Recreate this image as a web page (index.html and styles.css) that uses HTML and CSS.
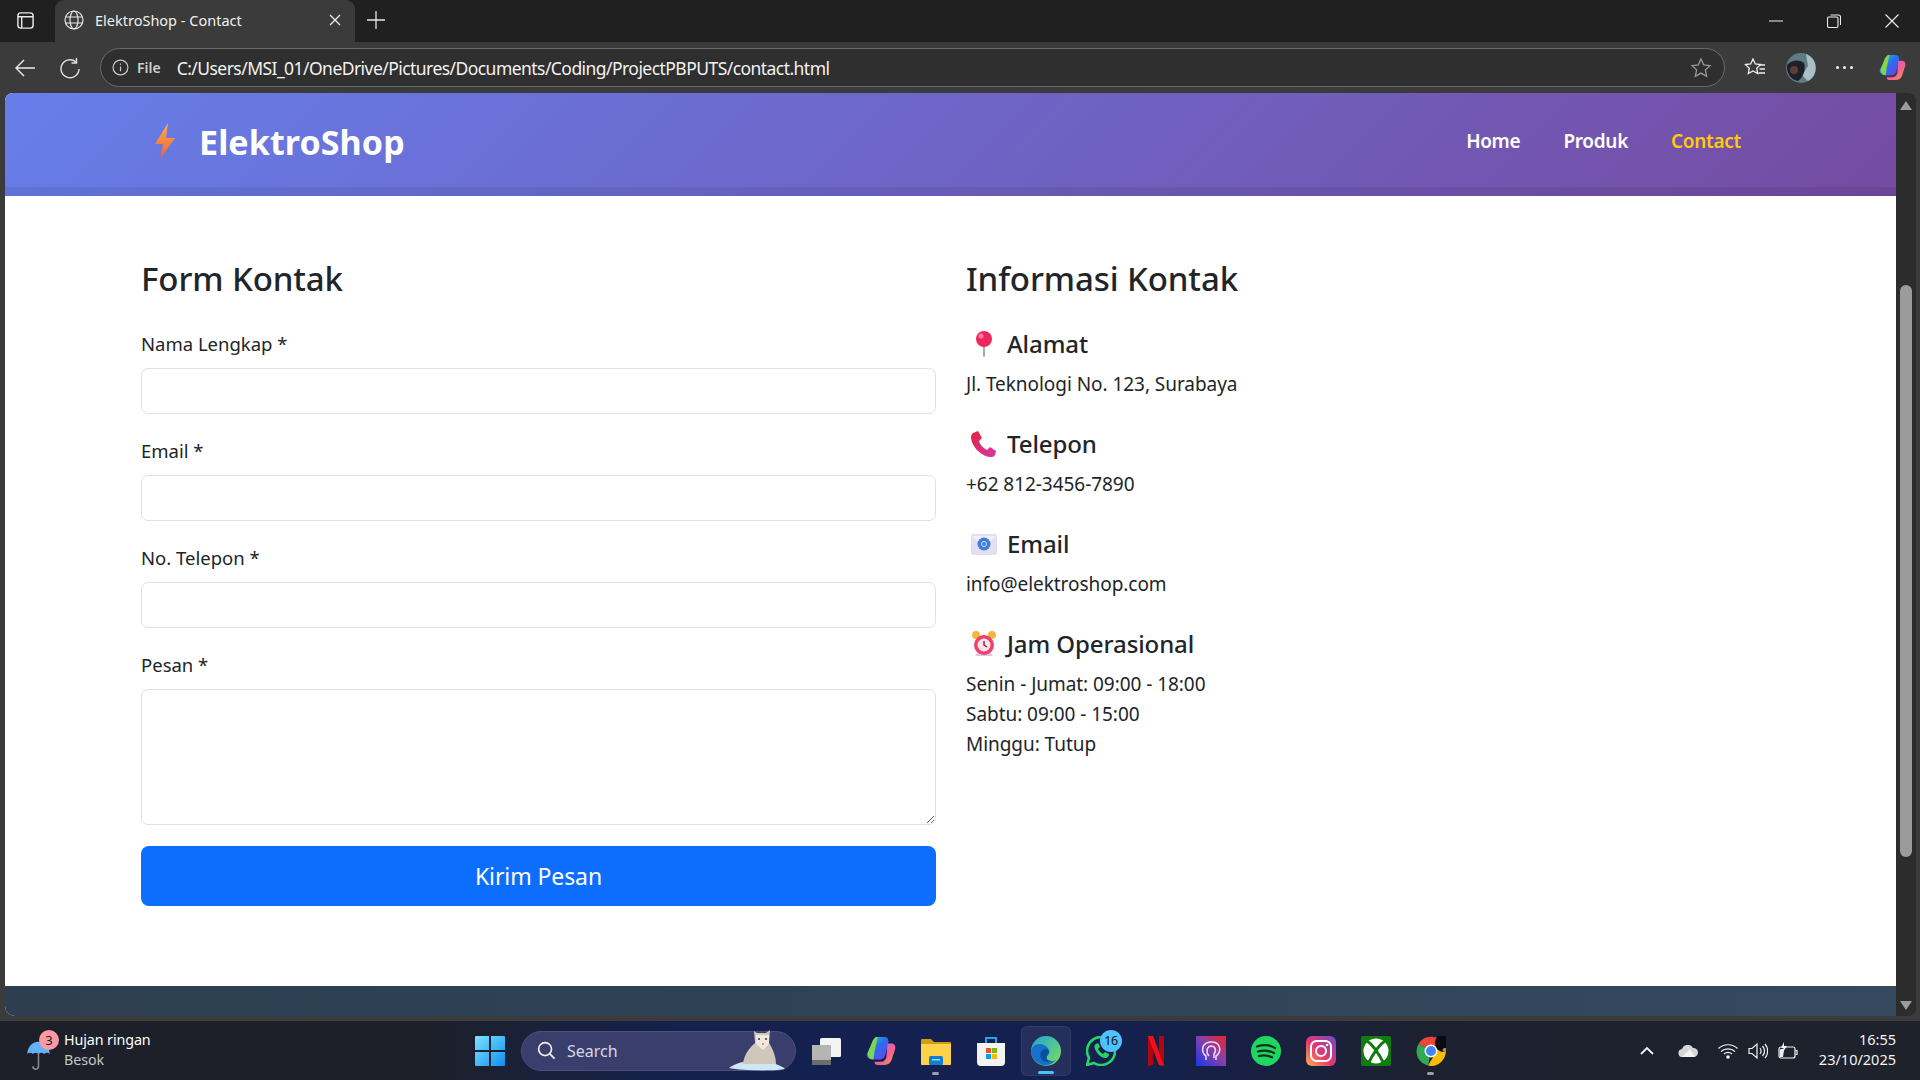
FILE: index.html
```html
<!DOCTYPE html>
<html lang="en">
<head>
    <meta charset="UTF-8">
    <title>ElektroShop - Contact</title>
    <link rel="stylesheet" href="styles.css">
</head>
<body>
<div class="window">
    <!-- tab strip -->
    <div class="tabbar">
        <svg class="tab-side" viewBox="0 0 20 20" fill="none" stroke="#e8e8e8" stroke-width="1.5"><rect x="2" y="2" width="16" height="16" rx="3"/><path d="M2 6h16M6 6v12"/></svg>
        <div class="tab">
            <svg class="tab-globe" viewBox="0 0 20 20" fill="none" stroke="#e6e6e6" stroke-width="1.2"><circle cx="10" cy="10" r="9"/><ellipse cx="10" cy="10" rx="4" ry="9"/><path d="M1.5 7h17M1.5 13h17"/></svg>
            <span class="tab-title">ElektroShop - Contact</span>
            <svg class="tab-close" viewBox="0 0 12 12" stroke="#eee" stroke-width="1.3"><path d="M1 1l10 10M11 1L1 11"/></svg>
        </div>
        <svg class="tab-new" viewBox="0 0 18 18" stroke="#e8e8e8" stroke-width="1.3"><path d="M9 0v18M0 9h18"/></svg>
        <div class="win-controls">
            <svg viewBox="0 0 14 14" stroke="#eee" stroke-width="1"><path d="M0 7h14"/></svg>
            <svg viewBox="0 0 14 14" fill="none" stroke="#eee" stroke-width="1.1"><rect x="0.5" y="3" width="10.5" height="10.5" rx="1.5"/><path d="M3.5 1h8a2 2 0 0 1 2 2v8"/></svg>
            <svg viewBox="0 0 14 14" stroke="#eee" stroke-width="1.1"><path d="M0.5 0.5l13 13M13.5 0.5l-13 13"/></svg>
        </div>
    </div>

    <!-- address bar row -->
    <div class="toolbar">
        <svg class="tool-icon tool-back" viewBox="0 0 22 22" fill="none" stroke="#eee" stroke-width="1.4"><path d="M21 11H2M10 3l-8 8 8 8"/></svg>
        <svg class="tool-icon tool-reload" viewBox="0 0 22 22" fill="none" stroke="#e4e4e4" stroke-width="1.4"><path d="M17 5a9 9 0 1 0 3 7"/><path d="M17.500 1v5h-5"/></svg>
        <div class="address">
            <svg class="info-icon" viewBox="0 0 16 16" fill="none" stroke="#ccc" stroke-width="1.1"><circle cx="8" cy="8" r="7"/><path d="M8 7v4.500M8 4.200v1.300"/></svg>
            <span class="file-label">File</span>
            <span class="url">C:/Users/MSI_01/OneDrive/Pictures/Documents/Coding/ProjectPBPUTS/contact.html</span>
            <svg class="star" viewBox="0 0 22 22" fill="none" stroke="#9a9a9a" stroke-width="1.3"><path d="M11 2l2.700 5.800 6.300.8-4.600 4.300 1.200 6.300L11 16.100l-5.600 3.100 1.200-6.300L2 8.600l6.300-.8z"/></svg>
        </div>
        <svg class="tool-icon tool-favs" viewBox="0 0 22 22" fill="none" stroke="#eee" stroke-width="1.3"><path d="M9 2l2.300 5 5.200.6-3.800 3.600 1 5.300L9 13.900l-4.700 2.600 1-5.300L1.500 7.600 6.700 7z"/><path d="M15 8h6M15.500 12h5.500M14.500 16h6.500"/></svg>
        <svg class="avatar" viewBox="0 0 30 30"><circle cx="15" cy="15" r="15" fill="#5f7c84"/><path d="M20 1a15 15 0 0 1 2 27l-6-6 6-9z" fill="#a9c0c4"/><path d="M1 12c4-5 12-6 17-2 2 5 0 14-6 18C5 27 0 20 1 12z" fill="#1d2026"/><circle cx="8" cy="17" r="4" fill="#5b4034"/></svg>
        <div class="more-dots"><i></i><i></i><i></i></div>
        <svg class="copilot" viewBox="0 0 28 28">
            <defs>
                <linearGradient id="copA" x1="0" y1="0" x2="1" y2="1"><stop offset="0" stop-color="#1fc5e8"/><stop offset=".5" stop-color="#2d6bea"/><stop offset="1" stop-color="#7c3aed"/></linearGradient>
                <linearGradient id="copB" x1="0" y1="0" x2="1" y2="1"><stop offset="0" stop-color="#b65ef2"/><stop offset=".6" stop-color="#f2628e"/><stop offset="1" stop-color="#ffa14a"/></linearGradient>
            </defs>
            <path d="M9 1h8c3 0 4 2 4 4l-3 13c-1 3-3 4-5 4H7c-5 0-7-3-6-6z" fill="url(#copA)"/>
            <path d="M2 15l4-10c1-2 2-4 5-4L8 14l-1 8c-4 0-6-3-5-7z" fill="#7fd64b"/>
            <path d="M20 7h4c3 0 4 3 3 6l-3 9c-1 3-3 5-7 5h-6c-2 0-3-1-3-3h6c3 0 4-2 5-4z" fill="url(#copB)"/>
        </svg>
    </div>

    <!-- browser content -->
    <div class="content-frame">
        <div class="page">
            <nav class="navbar">
                <a class="brand">
                    <svg class="bolt" viewBox="0 0 22 36">
                        <defs><linearGradient id="boltFill" x1="0" y1="0" x2="0" y2="1"><stop offset="0" stop-color="#fdb244"/><stop offset="1" stop-color="#ee5d3f"/></linearGradient></defs>
                        <path d="M14 0L1 21h8L6 36l15-21h-9z" fill="url(#boltFill)"/>
                    </svg>
                    <span>ElektroShop</span>
                </a>
                <ul class="nav-links">
                    <li>Home</li>
                    <li>Produk</li>
                    <li class="active">Contact</li>
                </ul>
            </nav>

            <main class="contact">
                <section>
                    <h2 class="section-title">Form Kontak</h2>
                    <form>
                        <div class="field">
                            <label for="nama">Nama Lengkap *</label>
                            <input id="nama" type="text">
                        </div>
                        <div class="field">
                            <label for="email">Email *</label>
                            <input id="email" type="email">
                        </div>
                        <div class="field">
                            <label for="telp">No. Telepon *</label>
                            <input id="telp" type="tel">
                        </div>
                        <div class="field field-message">
                            <label for="pesan">Pesan *</label>
                            <textarea id="pesan"></textarea>
                        </div>
                        <button type="button" class="submit">Kirim Pesan</button>
                    </form>
                </section>

                <section>
                    <h2 class="section-title">Informasi Kontak</h2>
                    <div class="info-item">
                        <h3>
                            <svg class="emoji" viewBox="0 0 28 28">
                                <rect x="13" y="13" width="2" height="14" rx="1" fill="#a9a9b3"/>
                                <circle cx="14" cy="9" r="8" fill="#f0265f"/>
                                <circle cx="11" cy="6" r="2.500" fill="#ff7fa2"/>
                            </svg>
                            Alamat
                        </h3>
                        <p>Jl. Teknologi No. 123, Surabaya</p>
                    </div>
                    <div class="info-item">
                        <h3>
                            <svg class="emoji" viewBox="0 0 28 28">
                                <defs><linearGradient id="phoneFill" x1="0" y1="0" x2="1" y2="1"><stop offset="0" stop-color="#e0263f"/><stop offset="1" stop-color="#d836a8"/></linearGradient></defs>
                                <path d="M3 3l5-2 4 7-3 3c1 4 4 7 8 9l3-3 6 4-1 4c-1 2-3 2-5 2C10 26 1 15 1 7c0-2 1-3 2-4z" fill="url(#phoneFill)"/>
                            </svg>
                            Telepon
                        </h3>
                        <p>+62 812-3456-7890</p>
                    </div>
                    <div class="info-item">
                        <h3>
                            <svg class="emoji" viewBox="0 0 28 28">
                                <rect x="1" y="4" width="26" height="21" rx="2" fill="#e6ddf0"/>
                                <path d="M1 6l13 10 13-10" fill="#f3eef8"/>
                                <circle cx="14" cy="14" r="6.500" fill="#3f7fd6"/>
                                <circle cx="14" cy="14" r="2.500" fill="none" stroke="#cfe2fa" stroke-width="1"/>
                            </svg>
                            Email
                        </h3>
                        <p>info@elektroshop.com</p>
                    </div>
                    <div class="info-item">
                        <h3>
                            <svg class="emoji" viewBox="0 0 28 28">
                                <circle cx="6" cy="5" r="4" fill="#f4b63f"/>
                                <circle cx="22" cy="5" r="4" fill="#f4b63f"/>
                                <path d="M8 22l-3 4h18l-3-4z" fill="#dcc6e0"/>
                                <circle cx="14" cy="15" r="10" fill="#f2406c"/>
                                <circle cx="14" cy="15" r="6.500" fill="#fde3ea"/>
                                <path d="M14 11v4l3 2" fill="none" stroke="#7a2340" stroke-width="1.400"/>
                            </svg>
                            Jam Operasional
                        </h3>
                        <p>Senin - Jumat: 09:00 - 18:00<br>Sabtu: 09:00 - 15:00<br>Minggu: Tutup</p>
                    </div>
                </section>
            </main>

            <footer class="page-footer"></footer>
        </div>

        <div class="scrollbar">
            <svg viewBox="0 0 12 9"><path d="M6 0l6 9H0z" fill="#9b9b9b"/></svg>
            <div class="thumb-track"><div class="thumb"></div></div>
            <svg viewBox="0 0 12 9"><path d="M0 0h12L6 9z" fill="#9b9b9b"/></svg>
        </div>
    </div>

    <!-- windows taskbar -->
    <div class="taskbar">
        <div class="weather">
            <svg class="umbrella" viewBox="0 0 26 36">
                <path d="M13 14v16c0 4-6 4-6 0" fill="none" stroke="#8a8a8a" stroke-width="1.600"/>
                <path d="M1 17C2 8 7 4 13 4s11 4 12 13c-2-2-4-2-6 0-2-2-4-2-6 0-2-2-4-2-6 0-2-2-4-2-6 0z" fill="#63b3f4"/>
            </svg>
            <span class="weather-badge">3</span>
            <div class="weather-text">
                <span>Hujan ringan</span>
                <span class="weather-sub">Besok</span>
            </div>
        </div>

        <svg class="start" viewBox="0 0 30 30">
            <defs><linearGradient id="winFill" x1="0" y1="0" x2="1" y2="1"><stop offset="0" stop-color="#7ce3ff"/><stop offset="1" stop-color="#0f8ef0"/></linearGradient></defs>
            <path d="M0 1a1 1 0 0 1 1-1h13v14H0zM16 0h13a1 1 0 0 1 1 1v13H16zM0 16h14v14H1a1 1 0 0 1-1-1zM16 16h14v13a1 1 0 0 1-1 1H16z" fill="url(#winFill)"/>
        </svg>

        <div class="search">
            <svg class="search-icon" viewBox="0 0 20 20" fill="none" stroke="#eee" stroke-width="1.800"><circle cx="8.500" cy="8.500" r="6.800"/><path d="M13.500 13.500l5 5"/></svg>
            <span>Search</span>
            <svg class="search-cat" viewBox="0 0 56 48">
                <path d="M0 44c8-6 20-8 30-7s20 3 26 8c-6 2-44 2-56-1z" fill="#cfe6f5"/>
                <path d="M14 40c1-9 6-16 12-21l-1-12 3 2h9l4-3-1 13c4 6 7 14 7 21z" fill="#cfc8ba"/>
                <path d="M27 11h13v9l-6 6-7-6z" fill="#efe9de"/>
                <circle cx="30" cy="15" r="1" fill="#333"/><circle cx="37" cy="15" r="1" fill="#333"/>
                <path d="M33 20h2" stroke="#d9707a" stroke-width="1.500"/>
            </svg>
        </div>

        <div class="task-apps">
            <div class="app">
                <svg viewBox="0 0 30 30"><rect x="9" y="2" width="21" height="19" rx="1.500" fill="#f4f4f4"/><rect x="1" y="9" width="19" height="15" fill="#b5b5b5"/><rect x="1" y="24" width="19" height="5" fill="#6d6d6d"/></svg>
            </div>
            <div class="app">
                <svg viewBox="0 0 28 28"><path d="M9 1h8c3 0 4 2 4 4l-3 13c-1 3-3 4-5 4H7c-5 0-7-3-6-6z" fill="url(#copA)"/><path d="M2 15l4-10c1-2 2-4 5-4L8 14l-1 8c-4 0-6-3-5-7z" fill="#7fd64b"/><path d="M20 7h4c3 0 4 3 3 6l-3 9c-1 3-3 5-7 5h-6c-2 0-3-1-3-3h6c3 0 4-2 5-4z" fill="url(#copB)"/></svg>
            </div>
            <div class="app app-open">
                <svg viewBox="0 0 30 30"><path d="M0 4a1 1 0 0 1 1-1h9l3 3h16a1 1 0 0 1 1 1v3H0z" fill="#d39b12"/><path d="M0 8h30v20a1 1 0 0 1-1 1H1a1 1 0 0 1-1-1z" fill="#ffd24d"/><rect x="8" y="20" width="14" height="9" rx="1.500" fill="#0f7fd0"/><rect x="11" y="23" width="8" height="1.500" fill="#9fd4fa"/></svg>
            </div>
            <div class="app">
                <svg viewBox="0 0 30 30"><path d="M10 7V2h10v5" fill="none" stroke="#1ea7e8" stroke-width="2"/><path d="M1 7h28v19a4 4 0 0 1-4 4H5a4 4 0 0 1-4-4z" fill="#f3f3f3"/><rect x="10" y="12" width="5" height="5" fill="#f25022"/><rect x="16" y="12" width="5" height="5" fill="#7fba00"/><rect x="10" y="18" width="5" height="5" fill="#00a4ef"/><rect x="16" y="18" width="5" height="5" fill="#ffb900"/></svg>
            </div>
            <div class="app app-active">
                <svg viewBox="0 0 30 30">
                    <defs><linearGradient id="edgeTop" x1="0" y1="0" x2="1" y2="1"><stop offset="0" stop-color="#1fa4d8"/><stop offset="1" stop-color="#7de05c"/></linearGradient></defs>
                    <circle cx="15" cy="15" r="15" fill="url(#edgeTop)"/>
                    <path d="M0 16C1 8 8 7 13 9c5 2 6 7 3 10-2 3 0 6 4 6 2 0 3 0 5-1-5 6-13 7-18 3-4-3-7-7-7-11z" fill="#1671c9"/>
                    <path d="M10 22c-2-5 1-10 6-9 3 1 3 4 0 7-1 2 0 5 4 5-4 2-8 1-10-3z" fill="#0c4f9e"/>
                </svg>
            </div>
            <div class="app">
                <svg viewBox="0 0 30 30"><path d="M1 29l2-7A14 14 0 1 1 8 27z" fill="none" stroke="#25d366" stroke-width="2.600"/><path d="M10 8c-2 1-2 4 0 7 2 4 6 7 9 7 3 0 4-2 4-4l-4-2-2 2c-2-1-4-3-5-5l2-2-2-4z" fill="#25d366"/></svg>
                <span class="app-badge">16</span>
            </div>
            <div class="app">
                <svg viewBox="0 0 30 30"><path d="M7 0h5l6 17V0h5v30l-5-1L12 13v16l-5 1z" fill="#b00712"/><path d="M12 0l11 30-5-1L7 0z" fill="#f0101c"/></svg>
            </div>
            <div class="app">
                <svg viewBox="0 0 30 30">
                    <defs><linearGradient id="purpleApp" x1="0" y1="1" x2="1" y2="0"><stop offset="0" stop-color="#1738e8"/><stop offset=".55" stop-color="#8b3fa8"/><stop offset="1" stop-color="#f5211f"/></linearGradient></defs>
                    <rect width="30" height="30" fill="url(#purpleApp)"/>
                    <path d="M10 24v-4c-3-2-4-5-3-9 2-6 13-7 16-1 2 4 0 8-3 10v4" fill="none" stroke="#e8d8f0" stroke-width="1.600"/>
                    <path d="M13 20c-3-3-3-9 2-10 4 0 6 4 3 8v4" fill="none" stroke="#e8d8f0" stroke-width="1.600"/>
                </svg>
            </div>
            <div class="app">
                <svg viewBox="0 0 30 30"><circle cx="15" cy="15" r="15" fill="#1ed760"/><path d="M6 10.500c6-2 13-1.500 18 1.500M7 15.500c5-1.500 11-1 16 1.500M8 20c4-1 9-.8 13 1.200" fill="none" stroke="#14301f" stroke-width="2.300" stroke-linecap="round"/></svg>
            </div>
            <div class="app">
                <svg viewBox="0 0 30 30">
                    <defs><linearGradient id="igFill" x1="0" y1="1" x2="1" y2="0"><stop offset="0" stop-color="#fdb24c"/><stop offset=".45" stop-color="#e8366c"/><stop offset="1" stop-color="#6a4cd0"/></linearGradient></defs>
                    <rect width="30" height="30" rx="6" fill="url(#igFill)"/>
                    <rect x="5" y="5" width="20" height="20" rx="5.500" fill="none" stroke="#fff" stroke-width="2"/>
                    <circle cx="15" cy="15" r="5" fill="none" stroke="#fff" stroke-width="2"/>
                    <circle cx="21" cy="9" r="1.300" fill="#fff"/>
                </svg>
            </div>
            <div class="app">
                <svg viewBox="0 0 30 30"><rect width="30" height="30" rx="2" fill="#107c10"/><circle cx="15" cy="15" r="12.500" fill="#fff"/><path d="M6 5c5 3 12 13 17 23M24 5C19 8 12 18 7 28" fill="none" stroke="#107c10" stroke-width="3"/></svg>
            </div>
            <div class="app app-open">
                <svg viewBox="0 0 30 30">
                    <path d="M15 15L2.500 8A14.500 14.500 0 0 1 29 11H15z" fill="#e8453c"/>
                    <path d="M15 15L2.500 8A14.500 14.500 0 0 0 12 29.500z" fill="#34a853"/>
                    <path d="M15 11h14a14.500 14.500 0 0 1-17 18.500L19 18z" fill="#fbbc04"/>
                    <circle cx="15" cy="15" r="6.500" fill="#fff"/>
                    <circle cx="15" cy="15" r="5" fill="#4285f4"/>
                    <ellipse cx="27" cy="7" rx="8" ry="9" fill="#0b0a10"/>
                    <ellipse cx="29" cy="14" rx="2.500" ry="2" fill="#b48a62"/>
                </svg>
            </div>
        </div>

        <div class="tray">
            <svg class="tray-caret" viewBox="0 0 14 8" fill="none" stroke="#f2f2f2" stroke-width="1.800"><path d="M1 7l6-6 6 6"/></svg>
            <svg class="tray-cloud" viewBox="0 0 20 12"><path d="M5 12a4 4 0 0 1-1-8 6 6 0 0 1 11-1 4.500 4.500 0 0 1 1 9z" fill="#d6d6d6"/><path d="M4 12l8-8 5 8z" fill="#f3f3f3"/></svg>
            <svg class="tray-icon" viewBox="0 0 20 16" fill="none" stroke="#f2f2f2" stroke-width="1.200"><path d="M0.500 5.500c5-5 14-5 19 0M3 8.500c4-3.500 10-3.500 14 0M6 11c2.500-2 5.500-2 8 0"/><circle cx="10" cy="14" r="1.200" fill="#f2f2f2"/></svg>
            <svg class="tray-icon" viewBox="0 0 20 18" fill="none" stroke="#f2f2f2" stroke-width="1.200"><path d="M1 6.500h3l5-4.500v14l-5-4.500H1zM12 6c1.500 2 1.500 4 0 6M14.500 4c2.500 3 2.500 7 0 10M17 2c3.500 4 3.500 10 0 14"/></svg>
            <svg class="tray-icon" viewBox="0 0 20 18" fill="none" stroke="#f2f2f2" stroke-width="1.200"><rect x="1" y="5" width="16" height="11" rx="2"/><path d="M17.500 8.500h1.500v4h-1.500"/><path d="M2.500 14.500V8l3-1-1 7.500z" fill="#f2f2f2"/><path d="M6 0L3 6h3l-1 4 4-6H6z" fill="#f2f2f2" stroke="none"/></svg>
            <div class="clock">
                <span>16:55</span>
                <span>23/10/2025</span>
            </div>
        </div>
    </div>
</div>
</body>
</html>
```

FILE: styles.css
```css
* {
    padding: 0;
    margin: 0;
    box-sizing: border-box;
}

html, body {
    height: 100%;
    overflow: hidden;
}

body {
    font-family: 'Noto Sans', 'Open Sans', sans-serif;
    color: #212529;
}

.window {
    height: 100vh;
    display: flex;
    flex-direction: column;
    background: #3b3b3b;
}

/* Tab strip */
.tabbar {
    height: 42px;
    flex-shrink: 0;
    display: flex;
    align-items: center;
    background: #202020;
}

.tab-side {
    width: 19px;
    height: 19px;
    margin: -2px 20px 0 16px;
}

.tab {
    width: 300px;
    height: 42px;
    display: flex;
    align-items: center;
    padding: 0 0 2px 9px;
    background: #3b3b3b;
    border-radius: 9px 9px 0 0;
}

.tab-globe {
    width: 20px;
    height: 20px;
    margin-right: 11px;
}

.tab-title {
    flex: 1;
    font-size: 14.5px;
    color: #f0f0f0;
}

.tab-close {
    width: 12px;
    height: 12px;
    margin-right: 14px;
}

.tab-new {
    width: 18px;
    height: 18px;
    margin: -2px 0 0 12px;
}

.win-controls {
    margin-left: auto;
    padding-right: 21px;
    display: flex;
    gap: 44px;
}

.win-controls svg {
    width: 14px;
    height: 14px;
}

/* Toolbar */
.toolbar {
    height: 51px;
    flex-shrink: 0;
    display: flex;
    align-items: center;
    background: #3b3b3b;
}

.tool-icon {
    width: 22px;
    height: 22px;
}

.tool-back {
    margin-left: 14px;
}

.tool-reload {
    margin-left: 23px;
    margin-right: 19px;
}

.address {
    width: 1625px;
    height: 39px;
    display: flex;
    align-items: center;
    padding: 0 12px 0 11px;
    background: #2f2f2f;
    border: 1px solid #6a6a6a;
    border-radius: 20px;
}

.info-icon {
    width: 17px;
    height: 17px;
    margin-right: 8px;
}

.file-label {
    font-size: 14px;
    font-weight: 600;
    color: #cfcfcf;
    margin-right: 16px;
}

.url {
    flex: 1;
    font-size: 17.5px;
    letter-spacing: -0.55px;
    color: #f2f2f2;
}

.star {
    width: 22px;
    height: 22px;
}

.tool-favs {
    margin-left: 19px;
}

.avatar {
    width: 30px;
    height: 30px;
    margin-left: 20px;
}

.more-dots {
    display: flex;
    gap: 4px;
    margin-left: 20px;
}

.more-dots i {
    width: 3px;
    height: 3px;
    border-radius: 50%;
    background: #eee;
}

.copilot {
    width: 27px;
    height: 27px;
    margin-left: 26px;
}

/* Page */
.content-frame {
    flex: 1;
    display: flex;
    min-height: 0;
    padding: 0 4px 5px 5px;
}

.page {
    flex: 1;
    display: flex;
    flex-direction: column;
    background: #fff;
    border-radius: 8px 0 0 10px;
    overflow: hidden;
}

.navbar {
    height: 103px;
    flex-shrink: 0;
    display: flex;
    align-items: center;
    justify-content: space-between;
    padding: 0 155px 8px 149px;
    background: linear-gradient(135deg, #667eea, #764ba2);
    box-shadow: inset 0 -9px 0 rgba(0, 0, 0, 0.07);
}

.brand {
    display: flex;
    align-items: center;
    font-size: 34px;
    font-weight: 700;
    letter-spacing: 0.1px;
    color: #fff;
}

.brand span {
    margin-top: 2px;
}

.bolt {
    width: 22px;
    height: 36px;
    margin-right: 23px;
}

.nav-links {
    display: flex;
    gap: 43px;
    list-style: none;
    font-size: 19px;
    font-weight: 600;
    letter-spacing: -0.3px;
    color: #fff;
}

.nav-links .active {
    color: #ffc90b;
}

.contact {
    flex: 1;
    display: grid;
    grid-template-columns: 795px 1fr;
    column-gap: 30px;
    padding: 63px 0 0 136px;
    align-items: start;
}

.section-title {
    font-size: 33px;
    font-weight: 500;
    line-height: 40px;
    letter-spacing: -0.1px;
    margin-bottom: 30px;
}

.field {
    margin-bottom: 22px;
}

.field label {
    display: block;
    font-size: 18.5px;
    line-height: 29px;
    margin-bottom: 10px;
}

.field input, .field textarea {
    display: block;
    width: 100%;
    height: 46px;
    background: #fff;
    border: 1px solid #dee2e6;
    border-radius: 7px;
    outline: none;
}

.field textarea {
    height: 136px;
}

.field-message {
    margin-bottom: 21px;
}

.submit {
    display: block;
    width: 100%;
    height: 60px;
    font-family: inherit;
    font-size: 23px;
    letter-spacing: -0.1px;
    color: #fff;
    background: #0d6efd;
    border: none;
    border-radius: 8px;
}

.info-item {
    margin-bottom: 30.5px;
}

.info-item h3 {
    display: flex;
    align-items: center;
    font-size: 24px;
    font-weight: 500;
    line-height: 30px;
    letter-spacing: -0.1px;
    margin-bottom: 9.5px;
}

.emoji {
    width: 28px;
    height: 28px;
    margin: 0 9px 0 4px;
}

.info-item p {
    font-size: 19px;
    line-height: 30px;
    letter-spacing: -0.05px;
}

.page-footer {
    height: 30px;
    flex-shrink: 0;
    background: linear-gradient(90deg, #2c3e50, #34495e);
}

/* Scrollbar */
.scrollbar {
    width: 20px;
    display: flex;
    flex-direction: column;
    align-items: center;
    padding: 8px 0 6px;
    background: #2c2c2c;
    border-radius: 0 8px 8px 0;
}

.scrollbar svg {
    width: 12px;
    height: 9px;
}

.thumb-track {
    flex: 1;
    width: 100%;
    padding: 175px 4px 0;
}

.thumb {
    height: 572px;
    background: #9b9b9b;
    border-radius: 6px;
}

/* Taskbar */
.taskbar {
    height: 59px;
    flex-shrink: 0;
    display: flex;
    align-items: center;
    background: linear-gradient(90deg, #1d2029 0, #1d2029 22%, #14214f 36%, #14204f 58%, #1c2130 74%, #1d222b 100%);
    color: #fff;
}

.weather {
    position: relative;
    width: 475px;
    flex-shrink: 0;
    display: flex;
    align-items: center;
    padding-left: 26px;
}

.umbrella {
    width: 25px;
    height: 34px;
    margin-right: 13px;
    margin-top: 8px;
}

.weather-badge {
    position: absolute;
    left: 39px;
    top: 0;
    width: 20px;
    height: 20px;
    border-radius: 50%;
    background: #ff99a4;
    color: #1a1a1a;
    font-size: 13px;
    line-height: 20px;
    text-align: center;
}

.weather-text {
    display: flex;
    flex-direction: column;
    margin-top: -2px;
    font-size: 14.3px;
    line-height: 20px;
    letter-spacing: -0.1px;
}

.weather-sub {
    color: #c4c4c4;
}

.start {
    width: 30px;
    height: 30px;
    flex-shrink: 0;
    margin-right: 16px;
}

.search {
    width: 275px;
    height: 40px;
    flex-shrink: 0;
    display: flex;
    align-items: center;
    padding: 0 10px 0 15px;
    background: #3a3e6c;
    border: 1px solid #4b4f7c;
    border-radius: 20px;
    font-size: 16px;
    color: #d8d8e4;
}

.search-icon {
    width: 19px;
    height: 19px;
    margin-right: 11px;
}

.search-cat {
    width: 56px;
    height: 48px;
    margin-left: auto;
    margin-top: -6px;
}

.task-apps {
    display: flex;
    margin-left: 2px;
}

.app {
    position: relative;
    width: 55px;
    height: 50px;
    display: flex;
    align-items: center;
    justify-content: center;
}

.app svg {
    width: 30px;
    height: 30px;
}

.app-active {
    width: 50px;
    margin: 0 2.5px;
    background: rgba(255, 255, 255, 0.07);
    border: 1px solid rgba(255, 255, 255, 0.06);
    border-radius: 6px;
}

.app-active::after, .app-open::after {
    content: '';
    position: absolute;
    bottom: 1px;
    left: 50%;
    width: 7px;
    height: 3px;
    margin-left: -3.5px;
    border-radius: 2px;
    background: #9aa0ab;
}

.app-active::after {
    width: 16px;
    margin-left: -8px;
    background: #4cc2ff;
}

.app-badge {
    position: absolute;
    top: 4px;
    right: 6px;
    width: 22px;
    height: 22px;
    border-radius: 50%;
    background: #4cc2ff;
    color: #111;
    font-size: 12.5px;
    line-height: 22px;
    letter-spacing: -0.5px;
    text-align: center;
}

.tray {
    margin-left: auto;
    display: flex;
    align-items: center;
    padding-right: 24px;
}

.tray-caret {
    width: 14px;
    height: 8px;
    margin-right: 24px;
}

.tray-cloud {
    width: 20px;
    height: 12px;
    margin-right: 20px;
}

.tray-icon {
    width: 20px;
    height: 18px;
    margin-right: 10px;
}

.clock {
    display: flex;
    flex-direction: column;
    align-items: flex-end;
    margin: -3px 0 0 11px;
    font-size: 14.5px;
    line-height: 20px;
    color: #f4f4f4;
}
```
